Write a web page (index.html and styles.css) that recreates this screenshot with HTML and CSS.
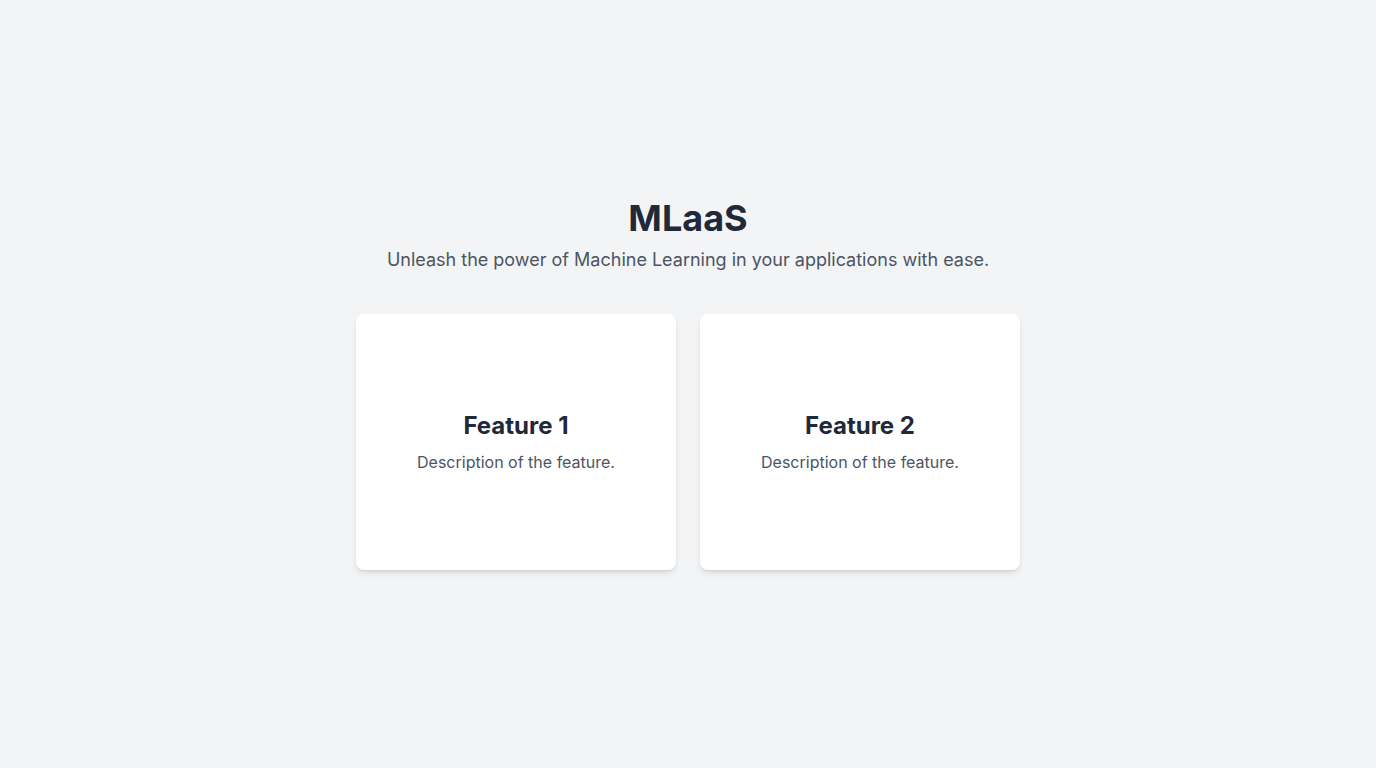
FILE: index.html
```html
<!DOCTYPE html>
<html lang="en">
<head>
<meta charset="utf-8">
<title>MLaaS</title>
<link rel="stylesheet" href="styles.css">
</head>
<body>
<main class="page">
  <h1 class="title">MLaaS</h1>
  <p class="subtitle">Unleash the power of Machine Learning in your applications with ease.</p>
  <div class="cards">
    <div class="card">
      <h2 class="card-title">Feature 1</h2>
      <p class="card-text">Description of the feature.</p>
    </div>
    <div class="card">
      <h2 class="card-title">Feature 2</h2>
      <p class="card-text">Description of the feature.</p>
    </div>
  </div>
</main>
</body>
</html>
```
FILE: styles.css
```css
* { box-sizing: border-box; }
html, body { margin: 0; padding: 0; }
body {
  background: #f3f4f6;
  font-family: Inter, "Noto Sans", sans-serif;
  color: #1f2937;
}
.page {
  min-height: 100vh;
  display: flex;
  flex-direction: column;
  align-items: center;
  justify-content: center;
}
.title {
  margin: 0 0 8px;
  font-size: 36px;
  line-height: 40px;
  font-weight: 700;
  color: #1f2937;
}
.subtitle {
  margin: 0 0 40px;
  font-size: 18px;
  line-height: 28px;
  color: #4b5563;
}
.cards {
  display: flex;
  gap: 24px;
}
.card {
  width: 320px;
  height: 256px;
  background: #fff;
  border-radius: 8px;
  box-shadow: 0 4px 6px -1px rgba(0,0,0,0.1), 0 2px 4px -2px rgba(0,0,0,0.1);
  display: flex;
  flex-direction: column;
  align-items: center;
  justify-content: center;
}
.card-title {
  margin: 0 0 8px;
  font-size: 24px;
  line-height: 32px;
  font-weight: 700;
  color: #1f2937;
}
.card-text {
  margin: 0;
  font-size: 16px;
  line-height: 24px;
  color: #4b5563;
}
```
